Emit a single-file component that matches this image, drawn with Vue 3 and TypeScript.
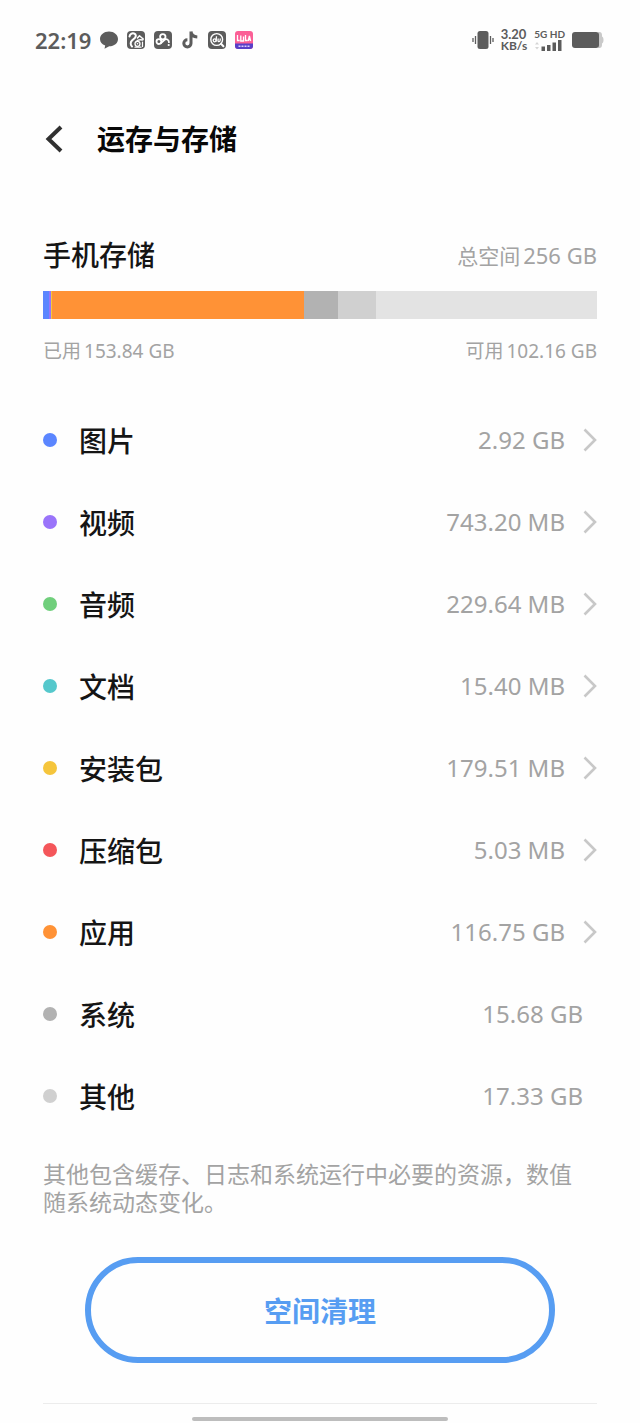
<script setup lang="ts">
interface Category {
  name: string
  size: string
  gb: number
  color: string
  link: boolean
}

const totalGb = 256

const categories: Category[] = [
  { name: '图片', size: '2.92 GB', gb: 2.92, color: '#5b86ff', link: true },
  { name: '视频', size: '743.20 MB', gb: 0.73, color: '#9a74fa', link: true },
  { name: '音频', size: '229.64 MB', gb: 0.22, color: '#70cf7c', link: true },
  { name: '文档', size: '15.40 MB', gb: 0.02, color: '#55c8cc', link: true },
  { name: '安装包', size: '179.51 MB', gb: 0.18, color: '#f5c53c', link: true },
  { name: '压缩包', size: '5.03 MB', gb: 0.01, color: '#f4565a', link: true },
  { name: '应用', size: '116.75 GB', gb: 116.75, color: '#ff9236', link: true },
  { name: '系统', size: '15.68 GB', gb: 15.68, color: '#b2b2b2', link: false },
  { name: '其他', size: '17.33 GB', gb: 17.33, color: '#d0d0d0', link: false },
]

const share = (gb: number): string => `${(gb / totalGb) * 100}%`
</script>

<template>
  <div class="screen">
    <div class="status">
      <span class="time">22:19</span>
      <svg class="app" viewBox="0 0 18 18" aria-hidden="true">
        <path d="M9 .5C4 .5 0 3.800 0 8c0 3.200 2 5.500 5.200 6.600L4.500 17.800l4.700-2.500C14.200 15.200 18 12.200 18 8S14 .5 9 .5z" fill="#5c5c5c" />
      </svg>
      <svg class="app" viewBox="0 0 18 18" aria-hidden="true">
        <rect width="18" height="18" rx="4" fill="#5c5c5c" />
        <g fill="none" stroke="#fff" stroke-linecap="round" stroke-linejoin="round">
          <path d="M2.500 5.500C3 3 5 2 7 2.500c2.300.7 2.300 3 .8 4.500L5 9.500c-2 2-1.500 4.500 0 6" stroke-width="2" />
          <path d="M10.500 7l2-2.200 2.800 2.400c1.200.3 1 1.600 0 1.800-2.300-.4-4.700.2-6 1.500" stroke-width="1.500" />
          <circle cx="10.500" cy="12.800" r="2.500" stroke-width="1.300" />
          <path d="M15.500 11v4.500M8 16.200h6" stroke-width="1.200" />
        </g>
        <circle cx="10.500" cy="12.800" r=".8" fill="#fff" />
      </svg>
      <svg class="app" viewBox="0 0 18 18" aria-hidden="true">
        <rect width="18" height="18" rx="4" fill="#5c5c5c" />
        <g fill="none" stroke="#fff" stroke-width="1.800">
          <circle cx="8.800" cy="5.800" r="2.700" />
          <circle cx="4.900" cy="10.600" r="2.400" />
          <path d="M6.700 12.300L10.300 9c2-1.700 4.700-.4 4.600 2.200" stroke-linecap="round" />
        </g>
        <circle cx="14.700" cy="14" r="1.100" fill="#fff" />
      </svg>
      <svg class="app" viewBox="0 0 18 18" aria-hidden="true">
        <path d="M10 .5v11.800a3.600 3.600 0 1 1-3.600-3.600M10 .5c.3 3.300 2.500 5.300 6.300 5.500" fill="none" stroke="#5c5c5c" stroke-width="3" />
      </svg>
      <svg class="app" viewBox="0 0 18 18" aria-hidden="true">
        <rect width="18" height="18" rx="4" fill="#5c5c5c" />
        <circle cx="8.700" cy="8.500" r="5.900" fill="none" stroke="#fff" stroke-width="1.400" />
        <path d="M13 12.800l2.400 2.400" stroke="#fff" stroke-width="2" stroke-linecap="round" />
        <g fill="none" stroke="#fff" stroke-width="1.300">
          <circle cx="6.700" cy="9.300" r="1.500" />
          <path d="M8.500 5.200l-.5 5.600M10.200 7.500l-.2 2c-.1 1.600 1.900 1.600 2.100 0l.2-2" />
        </g>
      </svg>
      <svg class="app" viewBox="0 0 18 18" aria-hidden="true">
        <rect width="18" height="18" rx="3" fill="#fb5f96" />
        <path d="M0 12.500h18V15a3 3 0 0 1-3 3H3a3 3 0 0 1-3-3z" fill="#5840c8" />
        <g fill="none" stroke="#fff" stroke-width="1.300">
          <path d="M2.500 4v5.500h2.200M5.800 4.500v5.500h2.700V5.500M10.500 4v5.500h2M13.200 10l1.200-5 1.200 5M13.500 8.500h2" />
          <path d="M3.500 15.300h11" stroke="#d9ccff" stroke-width="1.500" stroke-dasharray="2 1" />
        </g>
      </svg>

      <div class="system">
        <svg class="vibrate" viewBox="0 0 22 18" aria-hidden="true">
          <rect x="5.500" y="0" width="11" height="18" rx="2.500" fill="#5c5c5c" />
          <path d="M3.500 5v8M1 7v4M18.500 5v8M21 7v4" stroke="#5c5c5c" stroke-width="1.300" />
        </svg>
        <div class="speed"><span class="rate">3.20</span><span>KB/s</span></div>
        <div class="network">
          <span>5G HD</span>
          <svg viewBox="0 0 28 11" aria-hidden="true">
            <path d="M1 4.500l2-2.500 2 2.500zM1 7l2 2.500L5 7z" fill="#d5d5d5" />
            <path d="M7.500 6.500h3.500V11H7.500zM13 5h3.500v6H13zM18.500 2.500H22V11h-3.500zM24 0h3.500v11H24z" fill="#5c5c5c" />
          </svg>
        </div>
        <svg class="battery" viewBox="0 0 32 16" aria-hidden="true">
          <path d="M26 0h1.500C29 0 30 1.200 30 3v1.500c2 .5 2 6.500 0 7V13c0 1.800-1 3-2.500 3H26z" fill="#c9c9c9" />
          <rect width="27" height="16" rx="3" fill="#5c5c5c" />
        </svg>
      </div>
    </div>

    <header class="header">
      <button class="back" type="button" aria-label="返回">
        <svg viewBox="0 0 18 28" aria-hidden="true">
          <path d="M16 2L3.500 14 16 26" fill="none" stroke="#303030" stroke-width="4" />
        </svg>
      </button>
      <h1>运存与存储</h1>
    </header>

    <main class="content">
      <section>
        <div class="summary">
          <h2>手机存储</h2>
          <span class="total"><span class="label">总空间</span><span>256 GB</span></span>
        </div>
        <div class="bar">
          <span
            v-for="item in categories"
            :key="item.name"
            :style="{ width: share(item.gb), background: item.color }"
          ></span>
        </div>
        <div class="usage">
          <span class="amount"><span>已用</span><span>153.84 GB</span></span>
          <span class="amount"><span>可用</span><span>102.16 GB</span></span>
        </div>
      </section>

      <ul class="list">
        <li v-for="item in categories" :key="item.name">
          <component :is="item.link ? 'a' : 'div'" class="row" :href="item.link ? '#' : undefined">
            <i class="dot" :style="{ background: item.color }"></i>
            <span class="name">{{ item.name }}</span>
            <span class="size">{{ item.size }}</span>
            <svg v-if="item.link" class="chevron" viewBox="0 0 14 24" aria-hidden="true">
              <path d="M1.500 1.500L12 12 1.500 22.500" fill="none" stroke="#c8c8c8" stroke-width="2.600" />
            </svg>
          </component>
        </li>
      </ul>

      <p class="note">其他包含缓存、日志和系统运行中必要的资源，数值随系统动态变化。</p>
      <button class="clean" type="button">空间清理</button>
      <hr class="divider" />
    </main>
    <div class="home"></div>
  </div>
</template>

<style>
body {
  margin: 0;
  background: #fefefe;
}
</style>

<style scoped>
.screen {
  min-height: 100vh;
  box-sizing: border-box;
  display: flex;
  flex-direction: column;
  font-family: "Noto Sans", "Noto Sans CJK SC", sans-serif;
  color: #151515;
  background: #fefefe;
}
.status {
  display: flex;
  align-items: center;
  gap: 9px;
  height: 80px;
  padding: 0 36px 0 35px;
  color: #5c5c5c;
}
.time {
  font-size: 22px;
  line-height: 24px;
  font-weight: 600;
}
.app {
  width: 18px;
  height: 18px;
  flex: none;
}
.system {
  display: flex;
  align-items: center;
  gap: 7px;
  margin-left: auto;
}
.vibrate {
  width: 22px;
  height: 18px;
}
.speed,
.network {
  display: flex;
  flex-direction: column;
  font-family: Lato, sans-serif;
  font-weight: 700;
}
.speed {
  font-size: 12px;
  line-height: 12px;
}
.rate {
  font-size: 13px;
}
.network {
  font-size: 10px;
  line-height: 10px;
  gap: 1px;
}
.network svg {
  width: 28px;
  height: 11px;
}
.battery {
  width: 32px;
  height: 16px;
}
.header {
  display: flex;
  align-items: center;
  height: 118px;
  padding: 0 43px 0 45px;
  gap: 34px;
}
.back {
  display: flex;
  width: 18px;
  padding: 0;
  border: 0;
  background: none;
}
.back svg {
  width: 18px;
  height: 28px;
}
h1,
h2 {
  margin: 0;
  font-size: 28px;
  line-height: 40px;
}
h1 {
  color: #080808;
}
h2 {
  font-weight: 500;
}
.content {
  display: flex;
  flex-direction: column;
  padding: 37px 43px 0;
}
.summary,
.usage {
  display: flex;
  justify-content: space-between;
  align-items: center;
  color: #a3a3a3;
}
.summary h2 {
  color: #151515;
}
.total,
.amount {
  display: flex;
  align-items: baseline;
  gap: 3px;
}
.total {
  font-size: 22px;
  line-height: 30px;
}
.label {
  font-size: 21px;
}
.amount {
  font-size: 19px;
}
.bar {
  display: flex;
  height: 28px;
  margin: 16px 0 17px;
  background: #e3e3e3;
}
.usage {
  line-height: 30px;
}
.list {
  list-style: none;
  margin: 33px 0 0;
  padding: 0;
}
.row {
  display: flex;
  align-items: center;
  height: 82px;
  color: inherit;
  text-decoration: none;
}
.dot {
  width: 14px;
  height: 14px;
  border-radius: 50%;
}
.name {
  margin-left: 22px;
  padding-top: 2px;
  font-size: 28px;
  line-height: 40px;
  font-weight: 500;
}
.size {
  margin-left: auto;
  padding-right: 14px;
  font-size: 24px;
  line-height: 32px;
  color: #a3a3a3;
}
.chevron {
  width: 14px;
  height: 24px;
  margin-left: 4px;
}
.note {
  margin: 23px 0 0;
  padding-right: 10px;
  font-size: 23px;
  line-height: 28px;
  color: #a3a3a3;
}
.clean {
  height: 106px;
  margin: 41px 42px 0;
  border: 6px solid #579df2;
  border-radius: 53px;
  background: none;
  font: 700 28px/40px "Noto Sans CJK SC", sans-serif;
  color: #579df2;
}
.divider {
  width: 100%;
  margin: 40px 0 0;
  border: 0;
  border-top: 1px solid #ececec;
}
.home {
  width: 40%;
  height: 4px;
  margin: 13px auto 2px;
  border-radius: 2px;
  background: #bdbdbd;
}
</style>
